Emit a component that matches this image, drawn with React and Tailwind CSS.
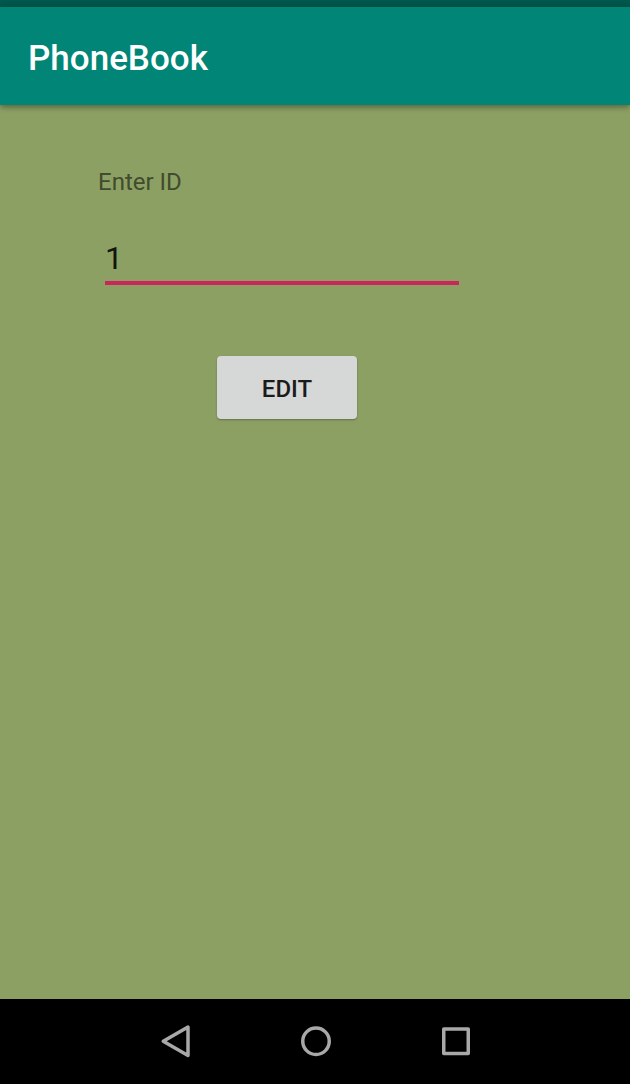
export default function App() {
  return (
    <div className="flex min-h-screen flex-col bg-[#8ca064] font-['Roboto',sans-serif]">
      <div className="h-[7px] bg-[#00574b]" />
      <header className="flex h-[98px] items-center bg-[#008577] px-7 pt-1.5 shadow-[0_2px_6px_rgba(0,0,0,0.4)]">
        <h1 className="text-[35px] leading-10 font-medium text-white">PhoneBook</h1>
      </header>
      <main className="flex flex-1 flex-col px-[98px] pt-[61px]">
        <form className="flex max-w-[378px] flex-col" onSubmit={(e) => e.preventDefault()}>
          <label htmlFor="contact-id" className="text-2xl text-[#414b2d]">Enter ID</label>
          <input
            id="contact-id"
            type="text"
            inputMode="numeric"
            defaultValue="1"
            className="mt-9 mr-[17px] ml-[7px] h-[51px] border-b-4 border-[#cb265c] bg-transparent text-[32px] leading-10 text-[#12150d] outline-none"
          />
          <button type="submit" className="mt-[71px] h-[63px] w-[140px] self-center rounded-[4px] bg-[#d6d7d7] pt-0.5 text-2xl font-medium text-[#1b1b1b] shadow-[0_1px_2px_rgba(0,0,0,0.3)]">
            EDIT
          </button>
        </form>
      </main>
      <nav aria-label="System" className="flex h-[85px] items-center justify-center gap-[100px] bg-black pb-px pl-0.5 text-[#a8a8a8]">
        <button type="button" aria-label="Back">
          <svg className="size-10" viewBox="0 0 40 40" fill="none" stroke="currentColor" strokeWidth="3.500" strokeLinejoin="round"><path d="M32 6v28.500L7.250 20.250z" /></svg>
        </button>
        <button type="button" aria-label="Home">
          <svg className="size-10" viewBox="0 0 40 40" fill="none" stroke="currentColor" strokeWidth="3.500"><circle cx="20" cy="20.250" r="13.250" /></svg>
        </button>
        <button type="button" aria-label="Recent apps">
          <svg className="size-10" viewBox="0 0 40 40" fill="none" stroke="currentColor" strokeWidth="3.500" strokeLinejoin="round"><rect x="7.750" y="8" width="24.500" height="24.500" /></svg>
        </button>
      </nav>
    </div>
  );
}
